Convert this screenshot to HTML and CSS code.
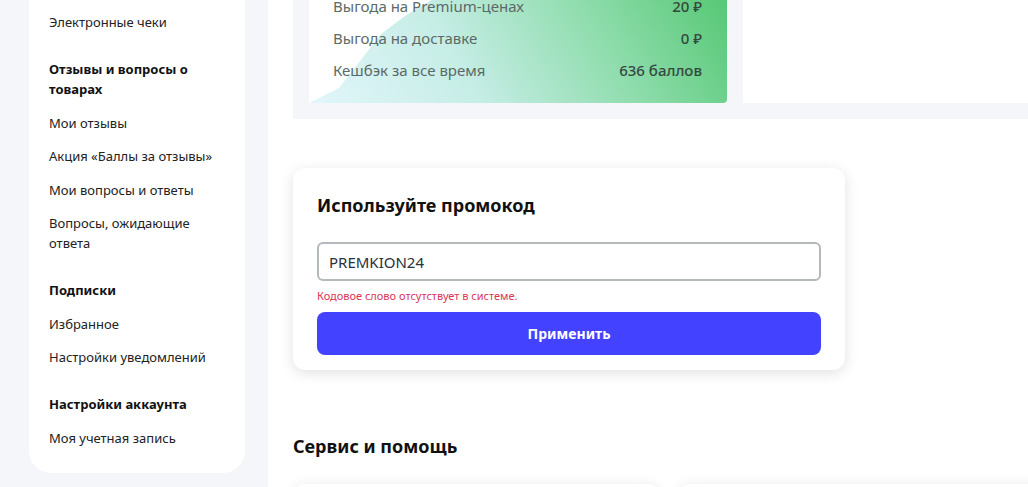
FILE: index.html
```html
<!DOCTYPE html>
<html lang="ru">
<head>
<meta charset="utf-8">
<link rel="stylesheet" href="styles.css">
</head>
<body>
<div class="page">
  <aside class="side-col">
    <nav class="side-card">
      <a class="side-item">Электронные чеки</a>
      <div class="side-head">Отзывы и вопросы о товарах</div>
      <a class="side-item">Мои отзывы</a>
      <a class="side-item">Акция «Баллы за отзывы»</a>
      <a class="side-item">Мои вопросы и ответы</a>
      <a class="side-item">Вопросы, ожидающие ответа</a>
      <div class="side-head">Подписки</div>
      <a class="side-item">Избранное</a>
      <a class="side-item">Настройки уведомлений</a>
      <div class="side-head">Настройки аккаунта</div>
      <a class="side-item">Моя учетная запись</a>
    </nav>
  </aside>
  <main class="main">
    <div class="main-inner">
      <section class="stats-panel">
        <div class="benefit-card">
          <div class="benefit-row"><span class="b-label">Выгода на Premium-ценах</span><span class="b-value">20 ₽</span></div>
          <div class="benefit-row"><span class="b-label">Выгода на доставке</span><span class="b-value">0 ₽</span></div>
          <div class="benefit-row"><span class="b-label">Кешбэк за все время</span><span class="b-value">636 баллов</span></div>
        </div>
        <div class="white-card"></div>
      </section>

      <section class="promo-card">
        <h2 class="promo-title">Используйте промокод</h2>
        <div class="promo-input">PREMKION24</div>
        <div class="promo-error">Кодовое слово отсутствует в системе.</div>
        <button class="promo-btn">Применить</button>
      </section>

      <h2 class="section-title">Сервис и помощь</h2>
      <div class="service-grid">
        <div class="service-card"></div>
        <div class="service-card"></div>
      </div>
    </div>
  </main>
</div>
</body>
</html>
```

FILE: styles.css
```css
* { box-sizing: border-box; }
html, body { margin: 0; padding: 0; }
body {
  font-family: "Noto Sans", "Open Sans", sans-serif;
  color: #1a1a1a;
  background: #ffffff;
  height: 487px;
  overflow: hidden;
}
.page {
  display: flex;
  height: 487px;
}
.side-col {
  width: 268px;
  flex: none;
  background: #f5f6fa;
  padding-left: 29px;
}
.side-card {
  width: 216px;
  margin-top: -40px;
  background: #fff;
  border-radius: 22px;
  padding: 52px 26px 25px 20px;
  display: flex;
  flex-direction: column;
  gap: 13.5px;
}
.side-item {
  font-size: 13px;
  line-height: 20px;
  color: #222;
}
.side-head {
  font-size: 13px;
  line-height: 20px;
  font-weight: 700;
  color: #111;
  margin-top: 13.5px;
}
.main {
  flex: 1;
  overflow: hidden;
  padding-left: 25px;
}
.main-inner {
  width: 780px;
}
.stats-panel {
  margin-top: -40px;
  background: #f4f6f9;
  padding: 16px 0 16px 16px;
  display: flex;
  gap: 16px;
}
.benefit-card {
  position: relative;
  width: 418px;
  flex: none;
  background: #fff;
  border-radius: 0 0 4px 0;
  padding: 20px 25px 23px 24px;
  display: flex;
  flex-direction: column;
  gap: 12px;
  overflow: hidden;
}
.benefit-card::before {
  content: "";
  position: absolute;
  inset: 0;
  background: linear-gradient(60deg, #e2f6fb 0%, #c6ede6 35%, #8ddcab 68%, #52c670 100%);
  clip-path: polygon(0 127px, 30px 112px, 58px 76px, 72px 58px, 96px 40px, 126px 22px, 150px 0, 100% 0, 100% 100%, 0 100%);
}
.benefit-row {
  position: relative;
  display: flex;
  justify-content: space-between;
  font-size: 15px;
  line-height: 20px;
}
.b-label { color: #5b6a66; }
.b-value { color: #34483f; font-weight: 500; }
.white-card {
  flex: 1;
  background: #fff;
}
.promo-card {
  width: 552px;
  margin-top: 49px;
  background: #fff;
  border-radius: 12px;
  box-shadow: 0 3px 14px rgba(0, 0, 0, 0.12);
  padding: 25px 24px 15px 24px;
  display: flex;
  flex-direction: column;
}
.promo-title {
  margin: 0;
  font-size: 18px;
  line-height: 24px;
  font-weight: 700;
  color: #111;
}
.promo-input {
  margin-top: 25px;
  height: 39px;
  border: 2px solid #b3b8bd;
  border-radius: 6px;
  padding: 0 10px;
  display: flex;
  align-items: center;
  font-size: 15px;
  color: #2b303a;
}
.promo-error {
  margin-top: 8px;
  font-size: 11px;
  line-height: 14px;
  color: #d8375a;
}
.promo-btn {
  margin-top: 9px;
  height: 43px;
  border: none;
  border-radius: 8px;
  background: #4343ff;
  color: #fff;
  font-family: inherit;
  font-size: 14px;
  font-weight: 700;
}
.section-title {
  margin: 64px 0 0;
  font-size: 18px;
  line-height: 24px;
  font-weight: 700;
  color: #111;
}
.service-grid {
  margin-top: 26px;
  display: grid;
  grid-template-columns: 367px 1fr;
  gap: 18px;
}
.service-card {
  height: 120px;
  background: #fff;
  border-radius: 12px;
  box-shadow: 0 2px 14px rgba(0, 0, 0, 0.1);
}
```
